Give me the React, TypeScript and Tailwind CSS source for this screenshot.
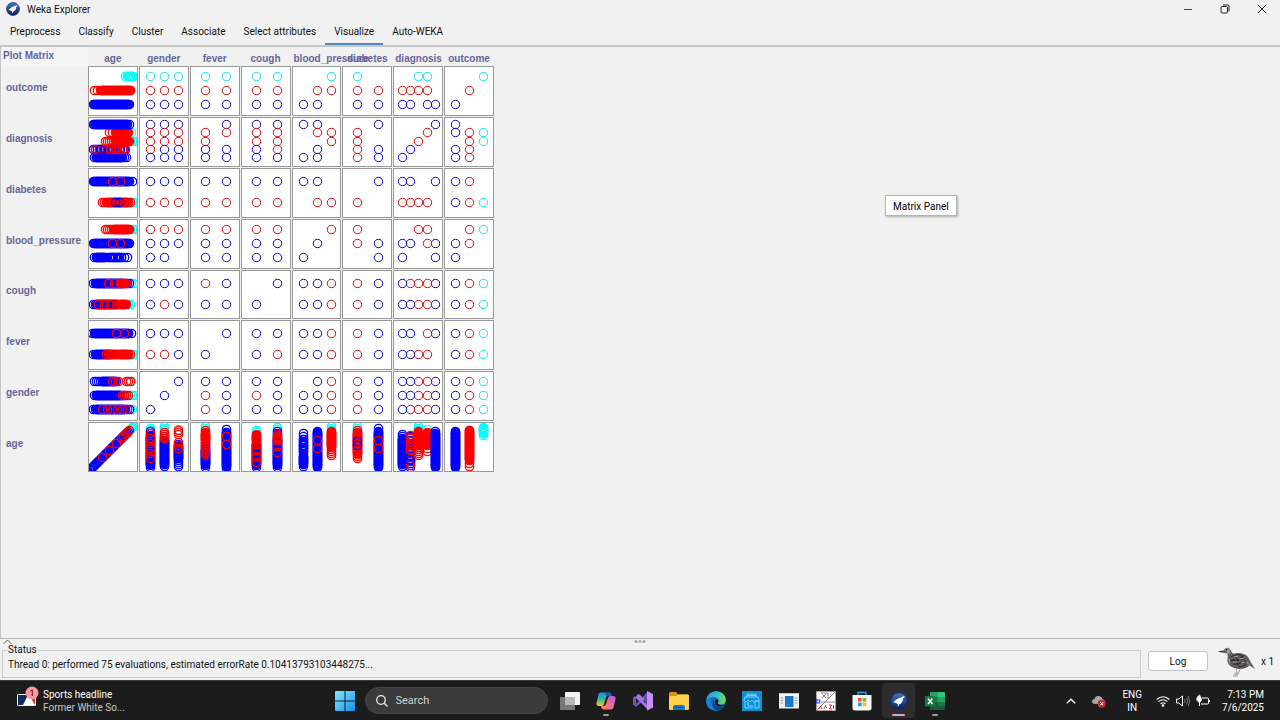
import type { ReactNode } from "react";

type Tone = "B" | "R" | "C";
type Band = [from: number, to: number, tone: Tone, step: number];

const TONES: Record<Tone, string> = { B: "#0000ff", R: "#ff0000", C: "#00ffff" };
const RING_TONES: Record<Tone, string> = { B: "#0a0ab4", R: "#d20f0f", C: "#10e6ee" };

const ATTRS = ["age", "gender", "fever", "cough", "blood_pressure", "diabetes", "diagnosis", "outcome"];
const ROWS = [...ATTRS].reverse();

const SLOTS: Record<number, number[]> = {
  2: [15, 36],
  3: [11, 25, 39],
  5: [9, 17, 25, 34, 42],
};
const COUNTS: Record<string, number> = {
  gender: 3, fever: 2, cough: 2, blood_pressure: 3, diabetes: 2, diagnosis: 5, outcome: 3,
};

// Classes found at each pair of nominal values, highest row value first.
const PAIRS: Record<string, string> = {
  "outcome|gender": "CCC/RRR/BBB",
  "outcome|fever": "CC/RR/BB",
  "outcome|cough": "CC/RR/BB",
  "outcome|blood_pressure": "..C/.RR/BB.",
  "outcome|diabetes": "C./RR/BB",
  "outcome|diagnosis": "..CC./RRRR./BB.BB",
  "outcome|outcome": "..C/.R./B..",
  "diagnosis|gender": "BBB/RRR/RRR/RBB/BBB",
  "diagnosis|fever": ".B/RR/R./BB/BB",
  "diagnosis|cough": "BB/RR/RR/BR/BB",
  "diagnosis|blood_pressure": "BB./.RR/..R/.B./BB.",
  "diagnosis|diabetes": ".B/R./R./RB/RB",
  "diagnosis|diagnosis": "....B/...R./..R../.B.../B....",
  "diabetes|gender": "BBB/RRR",
  "diabetes|fever": "BB/RR",
  "diabetes|cough": "BB/RR",
  "diabetes|blood_pressure": "BB./.RR",
  "diabetes|diabetes": ".B/R.",
  "blood_pressure|gender": "RRR/BBB/BB.",
  "blood_pressure|fever": "RR/BB/BB",
  "blood_pressure|cough": "RR/BB/BB",
  "blood_pressure|blood_pressure": "..R/.B./B..",
  "cough|gender": "BBB/BRB",
  "cough|fever": "RB/BB",
  "cough|cough": ".B/B.",
  "fever|gender": "BBB/RRB",
  "fever|fever": ".B/B.",
  "gender|gender": "..B/.B./B..",
};

// Spread of ages at each nominal value, lowest value first.
const AGES: Record<string, Band[][]> = {
  outcome: [
    [[5, 43, "B", 3], [6, 40, "B", 1]],
    [[6, 43, "R", 3], [13, 42, "R", 1]],
    [[37, 46, "C", 2], [40, 44, "C", 1]],
  ],
  diagnosis: [
    [[6, 39, "B", 2], [8, 33, "B", 1]],
    [[5, 32, "B", 2], [7, 36, "R", 4], [12, 37, "B", 4], [22, 37, "R", 3]],
    [[42, 46, "C", 2], [17, 40, "R", 2], [28, 41, "R", 1]],
    [[43, 43, "C", 2], [21, 41, "R", 3], [28, 40, "R", 1]],
    [[5, 43, "B", 3], [6, 39, "B", 1]],
  ],
  diabetes: [
    [[42, 46, "C", 2], [14, 42, "R", 2], [19, 39, "R", 1], [27, 31, "B", 4]],
    [[5, 44, "B", 3], [6, 40, "B", 1], [24, 34, "R", 8]],
  ],
  blood_pressure: [
    [[6, 39, "B", 3], [8, 16, "B", 1], [21, 34, "B", 2]],
    [[5, 43, "B", 3], [6, 40, "B", 1], [24, 36, "R", 8]],
    [[42, 46, "C", 2], [17, 42, "R", 2], [26, 40, "R", 1]],
  ],
  cough: [
    [[40, 43, "C", 2], [5, 37, "B", 2], [8, 28, "B", 1], [10, 34, "R", 6], [32, 38, "R", 2]],
    [[43, 46, "C", 2], [5, 42, "B", 2], [8, 32, "B", 1], [20, 40, "R", 6], [32, 36, "R", 1]],
  ],
  fever: [
    [[42, 46, "C", 2], [5, 30, "B", 2], [8, 22, "B", 1], [18, 42, "R", 2], [32, 39, "R", 1]],
    [[4, 43, "B", 3], [6, 40, "B", 1], [28, 36, "R", 8]],
  ],
  gender: [
    [[42, 44, "C", 2], [5, 42, "B", 2], [8, 36, "B", 1], [14, 41, "R", 5]],
    [[42, 46, "C", 2], [6, 36, "B", 2], [8, 32, "B", 1], [34, 41, "R", 2]],
    [[43, 43, "C", 1], [6, 29, "B", 2], [14, 26, "B", 1], [24, 30, "R", 3], [38, 43, "R", 2]],
  ],
};
const DIAGONAL: Band[] = [[42, 46, "C", 1], [4, 40, "B", 0.7], [14, 30, "R", 7], [33, 42, "R", 2]];

interface Dot { x: number; y: number; tone: Tone; dense: boolean }

function spread(bands: Band[], place: (age: number) => [number, number]): Dot[] {
  const dots: Dot[] = [];
  for (const [from, to, tone, step] of bands) {
    for (let age = from; age <= to; age += step) {
      const [x, y] = place(age);
      dots.push({ x, y, tone, dense: true });
    }
  }
  return dots;
}

function dotsFor(row: string, col: string): Dot[] {
  if (row === "age" && col === "age") return spread(DIAGONAL, (age) => [age, 49 - age]);
  if (col === "age") {
    return AGES[row].flatMap((bands, i) => spread(bands, (age) => [age, 49 - SLOTS[COUNTS[row]][i]]));
  }
  if (row === "age") {
    return AGES[col].flatMap((bands, i) => spread(bands, (age) => [SLOTS[COUNTS[col]][i], 50 - age]));
  }
  const direct = PAIRS[`${row}|${col}`];
  const lines = (direct ?? PAIRS[`${col}|${row}`]).split("/");
  const dots: Dot[] = [];
  lines.forEach((line, r) =>
    [...line].forEach((ch, c) => {
      if (ch === ".") return;
      const rank = lines.length - 1 - r;
      const [xi, yi] = direct ? [c, rank] : [rank, c];
      dots.push({ x: SLOTS[COUNTS[col]][xi], y: 49 - SLOTS[COUNTS[row]][yi], tone: ch as Tone, dense: false });
    }),
  );
  return dots;
}

function Plot({ row, col }: { row: string; col: string }) {
  return (
    <div className="relative overflow-hidden border border-[#999999] bg-white">
      <svg className="absolute -top-px -left-px size-[50px]" viewBox="0 0 50 50" role="img" aria-label={`${col} against ${row}`}>
        {dotsFor(row, col).map((d, i) => (
          <circle key={i} cx={d.x + 0.5} cy={d.y + 0.5} r="4.200" fill="none" stroke={(d.dense ? TONES : RING_TONES)[d.tone]} strokeWidth={d.dense ? 1.25 : 1} />
        ))}
      </svg>
    </div>
  );
}

function WekaMark({ className }: { className: string }) {
  return (
    <svg className={className} viewBox="0 0 20 20" aria-hidden="true">
      <defs>
        <linearGradient id="weka" x1="0" y1="0" x2="0" y2="1">
          <stop offset="0" stopColor="#3f79c4" />
          <stop offset="1" stopColor="#0a1c62" />
        </linearGradient>
      </defs>
      <circle cx="10" cy="10" r="9.2" fill="url(#weka)" stroke="#122a6c" />
      <path d="M16.7 5.2c-1.5-1-2.8-.7-3.6.5-2 .5-5 1.2-6.600 3L3.600 11.500l3 .7 2.200 1.400-.5 2.200 1-.1.9-1.900c2.600-.6 4.100-3.100 4.300-6.600z" fill="#fff" />
    </svg>
  );
}

function Kiwi() {
  return (
    <svg className="h-8 w-[38px]" viewBox="0 0 38 32" aria-hidden="true">
      <path d="M0 5.500 6 4.200C6.500 2 9.500.8 11.500 2.500c2 1.700 1.600 4.200 4 5.300 4-1.500 10-1 13 1.800 3 2.900 3.300 6 8.500 13.400l-5.500-3.500c-2.500 2.500-7 4-10.500 3.500-5.500-.5-10.500-3-11.500-7.500-.6-2.700 1.300-5.200-.5-8l-4-.7z" fill="#625d5a" />
      <path d="M7 4c1-2.400 4-2 5 0l.6 3.500-3 .5z" fill="#96928f" />
      <path d="M13 11c4-3 10-3 13-.5M13 14c4 2 8-2 13-1M15 18c4 1 8-2 13-1M20 21c3 0 5-1 8-2.500M17 10l3 5 4-5 3 6M12 16l4-3 4 6 4-4" fill="none" stroke="#2b2928" strokeWidth="1" />
      <path d="M16 11l4-1M21 13l5-1M15 16l4 0M23 17l4-1M11 13l1 4M29 16l3 4" stroke="#a8a29e" strokeWidth="1.100" />
      <path d="M0 5.500 6 4.700 3 6.300z" fill="#222" />
      <circle cx="8.500" cy="3.800" r=".8" fill="#111" />
      <path d="M18 22.500l1 3.500-4 3.500m4-3.500-1.500 4.500M22.500 22.500l-2 4.500-5 3.500m5-3.500-2 4" fill="none" stroke="#aaa39c" strokeWidth="1" />
    </svg>
  );
}

function Glyph({ children }: { children: ReactNode }) {
  return <svg className="size-5" viewBox="0 0 20 20" aria-hidden="true">{children}</svg>;
}

const APPS: { name: string; mark?: string; active?: boolean; icon: ReactNode }[] = [
  {
    name: "Task View",
    icon: (
      <Glyph>
        <rect x="5" y="1" width="15" height="13" rx=".8" fill="#f4f4f4" />
        <rect x="0" y="6" width="15" height="13" rx=".8" fill="#858585" fillOpacity=".88" />
        <path d="M5 6h10v8H5z" fill="#b8b8b8" />
      </Glyph>
    ),
  },
  {
    name: "Copilot",
    mark: "w-1.5 bg-[#9a9a9a]",
    icon: (
      <Glyph>
        <defs>
          <linearGradient id="copA" x1="0" y1="0" x2="0" y2="1"><stop stopColor="#1697e8" /><stop offset=".5" stopColor="#35b98f" /><stop offset="1" stopColor="#f5cc25" /></linearGradient>
          <linearGradient id="copB" x1="1" y1="0" x2="0" y2="1"><stop stopColor="#a65ef0" /><stop offset=".5" stopColor="#ed6898" /><stop offset="1" stopColor="#f98b45" /></linearGradient>
        </defs>
        <path d="M5 1.500h8c2 0 2.200 1 2.600 3h-3.200c-1.300 0-2 .8-2.400 2L8 13c-.5 1.500-1.300 2-2.700 2H3C.8 15 0 13.500.6 11.500l2-8c.3-1.200 1-2 2.400-2z" fill="url(#copA)" />
        <path d="M9 1.500h4c2 0 2.200 1 2.600 3h-3.200c-1.100 0-1.700.6-2 1.500z" fill="#1555b8" />
        <path d="M15 18.500H8c-2.200 0-2.500-1.200-2.900-3.500h2.400c1.300 0 2-.7 2.400-2L12 7c.5-1.500 1.200-2 2.500-2H17c2.200 0 3 1.300 2.500 3.500l-2 8c-.4 1.300-1.100 2-2.500 2z" fill="url(#copB)" />
      </Glyph>
    ),
  },
  {
    name: "Visual Studio",
    icon: (
      <Glyph>
        <path d="M0 6.500 2 5l5 4.500L14 1v7L9 11l-6 5-3-2.500z" fill="#7652b8" />
        <path d="M3 7.500v5L6 10z" fill="#1c1c1c" />
        <path d="m4 4 2-1 14 13-5 3L3 6.500z" fill="#a177e8" />
        <path d="m14 0 6 3v13.500l-6 3z" fill="#c391ff" />
        <path d="M14 6.500v7L9.500 10z" fill="#5a3f91" />
      </Glyph>
    ),
  },
  {
    name: "File Explorer",
    icon: (
      <Glyph>
        <path d="M0 2.500Q0 1 1.500 1H7l2 2.500h9.500Q20 3.500 20 5v6H0z" fill="#d9981c" />
        <path d="M0 6.500Q0 5 1.500 5h6L9 3.500h9.500Q20 3.500 20 5v12.500q0 1.500-1.500 1.500h-17Q0 19 0 17.500z" fill="#ffd04c" />
        <path d="M4 19v-3q0-2 2-2h8q2 0 2 2v3z" fill="#1b78c4" />
        <path d="M6 16.500h8" stroke="#0d4f8c" />
      </Glyph>
    ),
  },
  {
    name: "Edge",
    icon: (
      <Glyph>
        <defs>
          <linearGradient id="edge" x1="0" y1=".3" x2="1" y2=".5"><stop stopColor="#249ce4" /><stop offset=".5" stopColor="#33bed0" /><stop offset="1" stopColor="#6ddb50" /></linearGradient>
        </defs>
        <circle cx="10" cy="10" r="9.800" fill="#1567b8" />
        <path d="M.2 9.500C.8 4 5 .2 10.200.2c5.600 0 9.600 4 9.600 8.300 0 3.300-2.300 5.300-5 5.300-2.200 0-3.300-1-3-1.900.4-.8 1-1.500.8-2.800C12.300 7.500 10.300 6 7.700 6 4 6 1 8 .2 9.500z" fill="url(#edge)" />
        <path d="M.2 9.500C1.500 7.500 4.500 6 7.500 6c-2.800 1.300-3.600 4.700-2.300 7.500 1 2.800 3.500 5 6.700 6C5.600 20.700-.2 16 .2 9.500z" fill="#1683d5" />
        <path d="M8.300 9.500c-.9 2.500.6 5.500 4.200 6 2.200.3 4-.4 5.500-1.200.3 0 .4.100.3.300-2 3.300-5.700 4.900-8.300 4.100-3.500-1.300-4.600-6.200-1.700-9.200z" fill="#0d4386" />
        <path d="M9.500 9.200c-.6 1-.7 2.700.3 4.300 1.800 2.200 5.700 2.100 9 .3-1-.2-2.200-.1-4-.1-2.200 0-3.300-1-3-1.900.4-.6.800-1.200.7-2.100-.4-1.200-2.200-1.500-3-.5z" fill="#1c1c1c" />
      </Glyph>
    ),
  },
  {
    name: "Shop",
    icon: (
      <Glyph>
        <path d="M0 0h20v20H0z" fill="#0a91d6" />
        <path d="M5 6V3h9v3M3 6h13l1 3c0 2-3 2-3.200 0-.2 2-3.600 2-3.800 0-.2 2-3.600 2-3.800 0C6 11 2 11 2 9zM3 11v6h8M6 11v4h5M13 10h4v7h-4zM5 4.500h9" fill="none" stroke="#7cd2f7" strokeWidth="1" />
      </Glyph>
    ),
  },
  {
    name: "Window Manager",
    icon: (
      <Glyph>
        <path d="M0 2.500h20v15H0z" fill="#ececec" />
        <path d="M0 2.500h20v2H0z" fill="#fff" />
        <path d="M6 5h8.500v11H6z" fill="#1879cc" />
        <path d="M1.500 7H4M1.500 9.500H4M1.500 12H4M16 7h2.500M16 9.500h2.500M16 12h2.500" stroke="#a5a5a5" />
      </Glyph>
    ),
  },
  {
    name: "Plotter",
    icon: (
      <Glyph>
        <path d="M.5.500h19v19H.5z" fill="#fff" stroke="#b59b9b" />
        <path d="M0 20 20 0M5 2h7v6M5 11h14" fill="none" stroke="#6c6c6c" strokeWidth=".8" />
        <path d="m6 3 4 4m0-4L6 7" stroke="#666" strokeWidth=".8" />
        <path d="M.8 8v4h3V9h-3" fill="none" stroke="#3838ff" strokeWidth="1.100" />
        <path d="m3 18 1.500-3L6 18M8 18l2-4M9 15l2 2M13 14h2.500l-2 4H16M17.500 14v4" fill="none" stroke="#f02525" strokeWidth="1" />
      </Glyph>
    ),
  },
  {
    name: "Microsoft Store",
    icon: (
      <Glyph>
        <path d="M6 5V1.500h8V5" fill="none" stroke="#35a9e8" strokeWidth="1.300" />
        <path d="M.5 4h19v13q0 2.500-2.500 2.500H3Q.5 19.500.5 17z" fill="#f7f7f7" />
        <path d="M6 7h3.600v3.600H6z" fill="#ef5322" />
        <path d="M10.600 7h3.600v3.600h-3.600z" fill="#7dba27" />
        <path d="M6 11.600h3.600v3.600H6z" fill="#18a4ea" />
        <path d="M10.600 11.600h3.600v3.600h-3.600z" fill="#f9ba1a" />
      </Glyph>
    ),
  },
  { name: "Weka Explorer", mark: "w-[13px] bg-[#d6a2dc]", active: true, icon: <WekaMark className="size-[18px]" /> },
  {
    name: "Excel",
    mark: "w-1.5 bg-[#9a9a9a]",
    icon: (
      <Glyph>
        <path d="M5 1h8v18H6q-1 0-1-1z" fill="#177c46" />
        <path d="M5 1h7.500v5H5z" fill="#21a366" />
        <path d="M12.500 1H19q1 0 1 1v4h-7.500z" fill="#33c481" />
        <path d="M12.500 6H20v5h-7.500z" fill="#21a366" />
        <path d="M5 11h15v7q0 1-1 1H6q-1 0-1-1z" fill="#185c37" />
        <path d="M12.500 11H20v4h-7.500z" fill="#107c41" />
        <rect x="0" y="5" width="10.500" height="10.500" rx="1" fill="#117b42" />
        <path d="m3 7.500 4.500 5.500m0-5.500L3 13" stroke="#fff" strokeWidth="1.500" />
      </Glyph>
    ),
  },
];

const TABS = ["Preprocess", "Classify", "Cluster", "Associate", "Select attributes", "Visualize", "Auto-WEKA"];

function TitleBar() {
  return (
    <header className="flex h-[18px] items-center justify-between pr-3 pl-[6px]">
      <div className="flex items-center gap-[7px]">
        <WekaMark className="size-3.5" />
        <h1 className="pt-px">Weka Explorer</h1>
      </div>
      <div className="flex items-center gap-6">
        <button aria-label="Minimize" className="flex size-3 items-center justify-center">
          <svg className="size-2.5" viewBox="0 0 10 10"><path d="M1 5.500h8" stroke="#444" /></svg>
        </button>
        <button aria-label="Restore" className="ml-px flex size-3 items-center justify-center">
          <svg className="size-2.5" viewBox="0 0 10 10" fill="none" stroke="#222"><rect x="1" y="2.500" width="6.500" height="6.500" rx="1" /><path d="M3 1h5q1 0 1 1v5.500" /></svg>
        </button>
        <button aria-label="Close" className="ml-px flex size-3 items-center justify-center">
          <svg className="size-2.5" viewBox="0 0 10 10"><path d="m.8.8 8.400 8.400m0-8.400L.8 9.200" stroke="#222" /></svg>
        </button>
      </div>
    </header>
  );
}

function PlotMatrix() {
  return (
    <main className="relative grow border-l border-[#c4c4c4] text-[10px] leading-3 font-bold text-[#666699] [font-family:'Liberation_Sans',Arial,sans-serif]">
      <div className="grid w-[493px] grid-cols-[87px_1fr]">
        <h2 className="h-[19px] bg-[#f4f4f4] pt-[3px] pl-0.5">Plot Matrix</h2>
        <div className="grid grid-cols-8 gap-px pt-1.5">
          {ATTRS.map((a) => (
            <div key={a} className="flex min-w-0 justify-center-safe px-0.5"><span>{a}</span></div>
          ))}
        </div>
        <div className="grid h-[406px] grid-rows-8 gap-px">
          {ROWS.map((a) => (
            <div key={a} className="flex items-center pb-1.5 pl-[5px]">{a}</div>
          ))}
        </div>
        <div className="grid h-[406px] grid-cols-8 grid-rows-8 gap-px">
          {ROWS.flatMap((row) => ATTRS.map((col) => <Plot key={`${row}|${col}`} row={row} col={col} />))}
        </div>
      </div>
      <div role="tooltip" className="absolute top-[148px] left-[884px] border border-[#b4b4b4] bg-white px-[7px] pt-0.5 text-[10px] leading-[17px] font-normal text-black shadow-[1px_1px_2px_#aaaaaa] [font-family:Roboto,'Noto_Sans',sans-serif]">
        Matrix Panel
      </div>
    </main>
  );
}

function StatusBar() {
  return (
    <footer className="relative flex h-[42px] items-start border-t border-[#b8b8b8] pr-1.5">
      <svg className="absolute top-0 left-[3px] h-1.5 w-[9px]" viewBox="0 0 9 6"><path d="m.5 5 4-4 4 4" fill="none" stroke="#666" /></svg>
      <div className="absolute top-px left-1/2 flex -translate-x-1/2 gap-px">
        <i className="size-[3px] rounded-full bg-[#a8a8a8]" /><i className="size-[3px] rounded-full bg-[#a8a8a8]" /><i className="size-[3px] rounded-full bg-[#a8a8a8]" />
      </div>
      <fieldset className="mt-[5px] ml-0.5 h-[34px] min-w-0 grow border border-[#cccccc] px-[5px]">
        <legend className="-ml-px px-px leading-3">Status</legend>
        <p className="truncate pt-px leading-4">Thread 0: performed 75 evaluations, estimated errorRate 0.10413793103448275...</p>
      </fieldset>
      <button className="mt-3 ml-[7px] h-5 w-[60px] rounded-[3px] border border-[#c4c4c4] bg-white pt-px text-center">Log</button>
      <div className="mt-[7px] ml-2.5 flex items-center gap-[5px]">
        <Kiwi />
        <span>x 1</span>
      </div>
    </footer>
  );
}

function Taskbar() {
  return (
    <nav className="grid h-10 shrink-0 grid-cols-[1fr_auto_1fr] items-stretch border-t border-[#3c3c3c] bg-[#1c1c1c] text-white">
      <button className="flex items-center gap-1 pl-4 text-left">
        <svg className="mb-1.5 h-6 w-[23px]" viewBox="0 0 23 24" aria-hidden="true">
          <rect x="1" y="8" width="19" height="12" rx="1.500" fill="#f0f0f0" />
          <path d="M2 9h12L8 19H2z" fill="#102c5c" />
          <path d="M15 9h4v10h-2z" fill="#c83246" />
          <path d="m7 19 2-4 2-4 4 1 2 4 2 3z" fill="#fff" />
          <circle cx="16" cy="7" r="6.500" fill="#ff949d" />
          <path d="m14.300 5.200 2-1.200v6" fill="none" stroke="#49191c" />
        </svg>
        <span className="flex flex-col text-[10px] leading-[13px]">
          <span>Sports headline</span>
          <span className="text-[#c8c8c8]">Former White So...</span>
        </span>
      </button>

      <div className="flex items-center pl-2">
        <button aria-label="Start">
          <svg className="size-5" viewBox="0 0 20 20">
            <defs><linearGradient id="win" x1="0" y1="0" x2="1" y2="1"><stop stopColor="#82e8ff" /><stop offset="1" stopColor="#1591ea" /></linearGradient></defs>
            <path d="M1 0h8.500v9.500H0V1q0-1 1-1zm9.500 0H19q1 0 1 1v8.500h-9.500zM0 10.500h9.500V20H1q-1 0-1-1zm10.500 0H20V19q0 1-1 1h-8.500z" fill="url(#win)" />
          </svg>
        </button>
        <label className="ml-2.5 flex h-[27px] w-[183px] items-center gap-2 rounded-full border border-[#454545] bg-[#3b3b3b] px-2.5">
          <svg className="size-3 shrink-0" viewBox="0 0 12 12" fill="none" stroke="#eee" strokeWidth="1.300"><circle cx="5" cy="5" r="4.300" /><path d="m8.200 8.200 3.300 3.300" /></svg>
          <input type="text" aria-label="Search" placeholder="Search" className="w-full min-w-0 bg-transparent text-[11px] outline-none placeholder:text-[#d0d0d0]" />
        </label>
        <div className="ml-1 grid h-full w-[402px] grid-cols-11">
          {APPS.map((app) => (
            <button
              key={app.name}
              aria-label={app.name}
              className={`relative my-0.5 flex items-center justify-center rounded ${app.active ? "mx-0.5 bg-[#2d2d2d]" : ""}`}
            >
              {app.icon}
              {app.mark && <i className={`absolute bottom-0.5 h-0.5 rounded-full ${app.mark}`} />}
            </button>
          ))}
        </div>
      </div>

      <div className="flex items-center justify-end pr-4">
        <button aria-label="Hidden icons" className="mr-4">
          <svg className="h-1.5 w-2.5" viewBox="0 0 10 6"><path d="m.8 5.200 4.200-4 4.200 4" fill="none" stroke="#fff" strokeWidth="1.300" /></svg>
        </button>
        <button aria-label="OneDrive" className="mr-4">
          <svg className="size-3.5" viewBox="0 0 14 14">
            <path d="M3 10C1 10 0 9 0 7.500 0 6 1 5 2.500 5 3 2.800 5 1.500 7 2c2 .3 3 1.500 3.200 3C12 5 13 6.500 12.500 8L9 10z" fill="#a5a5a5" />
            <circle cx="9.700" cy="9.700" r="4" fill="#d4252e" />
            <path d="m8.200 8.200 3 3m0-3-3 3" stroke="#fff" />
          </svg>
        </button>
        <button className="mr-3.5 text-center text-[10px] leading-[13px]">ENG<br />IN</button>
        <button aria-label="Network, sound and battery" className="mr-3 flex items-center gap-1.5">
          <svg className="size-3.5" viewBox="0 0 14 14" fill="none" stroke="#fff" strokeWidth="1.100"><path d="M.6 5.500q6.400-5.600 12.800 0M2.500 7.700q4.500-4 9 0M4.500 9.800q2.500-2.200 5 0" /><circle cx="7" cy="11.500" r=".8" fill="#fff" /></svg>
          <svg className="size-3.5" viewBox="0 0 14 14" fill="none" stroke="#fff"><path d="M.6 5h2.200L6.500 2v10L2.800 9H.6z" /><path d="M8.500 5q1.500 2 0 4M10.500 3.500q2.500 3.500 0 7M12.200 2q3 5 0 10" stroke="#777" /></svg>
          <svg className="size-3.5" viewBox="0 0 14 14" fill="none" stroke="#fff"><path d="M6 4h5.500q1 0 1 1v4q0 1-1 1H5M13.500 6v2" /><path d="M3.500 1C1 3 0 5 1.500 7l2 1.500L5 7c1-2-.5-4-1.500-6zM3.500 7v5" fill="#fff" /></svg>
        </button>
        <button className="text-right text-[10px] leading-[13px]">7:13 PM<br />7/6/2025</button>
      </div>
    </nav>
  );
}

export default function App() {
  return (
    <div className="flex h-screen min-h-[620px] flex-col bg-[#f1f1f1] text-[10px] leading-4 text-[#111111] [font-family:Roboto,'Noto_Sans',sans-serif]">
      <TitleBar />
      <div role="tablist" className="flex h-[29px] shrink-0 border-b-2 border-[#c6c6c6] pl-px">
        {TABS.map((tab) => (
          <button
            key={tab}
            role="tab"
            aria-selected={tab === "Visualize"}
            className={`border-b-2 px-[9px] pt-0.5 ${tab === "Visualize" ? "border-[#4a88c0]" : "border-transparent"}`}
          >
            {tab}
          </button>
        ))}
      </div>
      <PlotMatrix />
      <StatusBar />
      <Taskbar />
    </div>
  );
}
